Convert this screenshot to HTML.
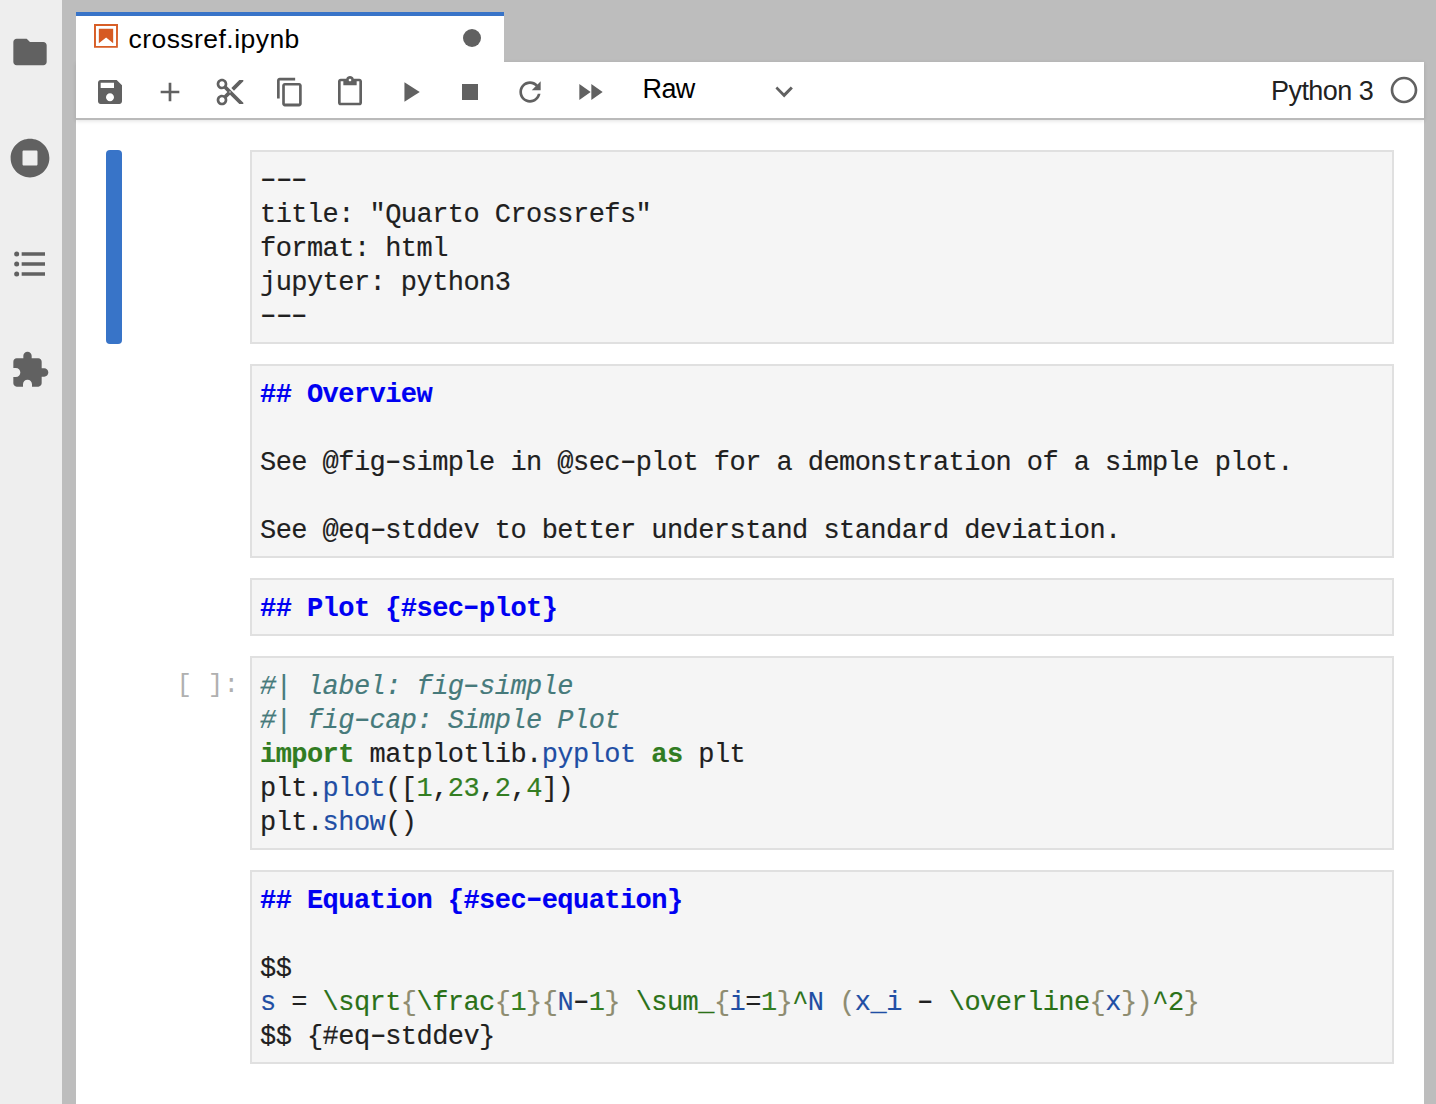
<!DOCTYPE html>
<html>
<head>
<meta charset="utf-8">
<style>
html,body{margin:0;padding:0;}
body{width:1436px;height:1104px;overflow:hidden;position:relative;background:#bdbdbd;font-family:"Liberation Sans",sans-serif;}
.abs{position:absolute;}
#sidebar{left:0;top:0;width:62px;height:1104px;background:#eeeeee;}
#sidebar svg{position:absolute;left:10px;width:40px;height:40px;}
#main{left:76px;top:62px;width:1348px;height:1042px;background:#ffffff;}
#tab{left:76px;top:12px;width:428px;height:47px;background:#fff;border-top:4px solid #3874c8;}
#toolbar{left:76px;top:62px;width:1348px;height:56px;background:#fff;border-bottom:2px solid #bababa;box-shadow:0 1px 4px rgba(0,0,0,0.12);}
.ti{position:absolute;top:76px;width:32px;height:32px;}
.ui{position:absolute;white-space:pre;color:#000;font-size:26px;line-height:30px;}
.collapser{left:106px;top:150px;width:16px;height:194px;border-radius:4px;background:#3874c8;}
.cell{position:absolute;left:250px;width:1140px;background:#f5f5f5;border:2px solid #e0e0e0;}
.code{position:absolute;left:260px;margin:0;white-space:pre;font-family:"Liberation Mono",monospace;font-size:27px;letter-spacing:-0.553px;line-height:34px;color:#202020;-webkit-text-stroke-width:0.15px;}
.d{display:inline-block;font-style:normal;transform:translateY(-1.3px) scaleX(1.6);}
.h{color:#0000f2;font-weight:bold;}
.cm{color:#467a7b;font-style:italic;}
.kw{color:#317c22;font-weight:bold;}
.pr{color:#1f4ea4;}
.nu{color:#337e22;}
.br{color:#8e8c70;}
.v2{color:#1f4ea4;}
.tg{color:#2b7118;}
.prompt{position:absolute;left:151px;width:88px;text-align:right;top:668px;white-space:pre;font-family:"Liberation Mono",monospace;font-size:26px;line-height:34px;color:#b0b0b0;}
</style>
</head>
<body>
<div id="sidebar" class="abs">
  <svg style="top:32px" viewBox="0 0 24 24"><path fill="#616161" d="M10 4H4c-1.1 0-1.99.9-1.99 2L2 18c0 1.1.9 2 2 2h16c1.1 0 2-.9 2-2V8c0-1.1-.9-2-2-2h-8l-2-2z"/></svg>
  <svg style="top:138px" viewBox="0 0 512 512"><path fill="#616161" d="M256 8C119 8 8 119 8 256s111 248 248 248 248-111 248-248S393 8 256 8zm96 328c0 8.8-7.2 16-16 16H176c-8.8 0-16-7.2-16-16V176c0-8.8 7.200-16 16-16h160c8.8 0 16 7.2 16 16v160z"/></svg>
  <svg style="top:244px" viewBox="0 0 24 24"><path fill="#616161" d="M7,5H21V7H7V5M7,13V11H21V13H7M4,4.5A1.5,1.5 0 0,1 5.5,6A1.5,1.5 0 0,1 4,7.5A1.5,1.5 0 0,1 2.5,6A1.5,1.5 0 0,1 4,4.5M4,10.5A1.5,1.5 0 0,1 5.5,12A1.5,1.5 0 0,1 4,13.5A1.5,1.5 0 0,1 2.5,12A1.5,1.5 0 0,1 4,10.5M7,19V17H21V19H7M4,16.5A1.5,1.5 0 0,1 5.5,18A1.5,1.5 0 0,1 4,19.5A1.5,1.5 0 0,1 2.5,18A1.5,1.5 0 0,1 4,16.5Z"/></svg>
  <svg style="top:350px" viewBox="0 0 24 24"><path fill="#616161" d="M20.5 11H19V7c0-1.1-.9-2-2-2h-4V3.5C13 2.12 11.88 1 10.5 1S8 2.12 8 3.5V5H4c-1.1 0-1.99.9-1.99 2v3.8H3.5c1.49 0 2.7 1.21 2.7 2.7s-1.21 2.7-2.7 2.7H2V20c0 1.1.9 2 2 2h3.8v-1.5c0-1.49 1.21-2.7 2.7-2.7 1.490 0 2.7 1.21 2.7 2.7V22H17c1.1 0 2-.9 2-2v-4h1.5c1.38 0 2.5-1.12 2.5-2.5S21.88 11 20.5 11z"/></svg>
</div>
<div id="main" class="abs"></div>
<div id="toolbar" class="abs"></div>
<div id="tab" class="abs"></div>
<svg class="abs" style="left:94px;top:24px;width:24px;height:24px" viewBox="1.8 1.8 18.4 18.4"><path fill="#d85e26" d="M18.7 3.3v15.4H3.3V3.3h15.4m1.5-1.5H1.8v18.3h18.3l.1-18.3z"/><path fill="#d65a22" d="M16.5 16.5l-5.4-4.3-5.6 4.3v-11h11z"/></svg>
<div class="ui" style="left:128.5px;top:24px;font-size:26.5px;letter-spacing:0.45px;">crossref.ipynb</div>
<div class="abs" style="left:463px;top:29px;width:18px;height:18px;border-radius:50%;background:#616161;"></div>
<svg class="ti" style="left:94px" viewBox="0 0 24 24"><path fill="#616161" d="M17 3H5c-1.11 0-2 .9-2 2v14c0 1.1.89 2 2 2h14c1.1 0 2-.9 2-2V7l-4-4zm-5 16c-1.66 0-3-1.34-3-3s1.34-3 3-3 3 1.34 3 3-1.34 3-3 3zm3-10H5V5h10v4z"/></svg>
<svg class="ti" style="left:154px" viewBox="0 0 24 24"><path fill="#616161" d="M19 13h-6v6h-2v-6H5v-2h6V5h2v6h6v2z"/></svg>
<svg class="ti" style="left:214px" viewBox="0 0 24 24"><path fill="#616161" d="M9.64 7.64c.23-.5.36-1.05.36-1.64 0-2.21-1.79-4-4-4S2 3.79 2 6s1.79 4 4 4c.59 0 1.14-.13 1.64-.36L10 12l-2.36 2.36C7.140 14.13 6.59 14 6 14c-2.21 0-4 1.79-4 4s1.79 4 4 4 4-1.79 4-4c0-.59-.13-1.14-.36-1.64L12 14l7 7h3v-1L9.64 7.64zM6 8c-1.1 0-2-.89-2-2s.9-2 2-2 2 .89 2 2-.9 2-2 2zm0 12c-1.1 0-2-.89-2-2s.9-2 2-2 2 .89 2 2-.9 2-2 2zm6-7.5c-.28 0-.5-.22-.5-.5s.22-.5.5-.5.5.22.5.5-.22.5-.5.5zM19 3l-6 6 2 2 7-7V3z"/></svg>
<svg class="ti" style="left:274px" viewBox="0 0 18 18"><path fill="#616161" d="M11.9,1H3.2C2.4,1,1.7,1.7,1.7,2.5v10.2h1.5V2.5h8.7V1z M14.1,3.9h-8c-0.8,0-1.5,0.7-1.5,1.5v10.2c0,0.8,0.7,1.5,1.5,1.5h8 c0.8,0,1.5-0.7,1.5-1.5V5.4C15.6,4.6,14.9,3.9,14.1,3.9z M14.1,15.5h-8V5.4h8V15.5z"/></svg>
<svg class="ti" style="left:334px" viewBox="0 0 24 24"><path fill="#616161" d="M19 2h-4.18C14.4.84 13.3 0 12 0c-1.3 0-2.4.84-2.82 2H5c-1.1 0-2 .9-2 2v16c0 1.1.9 2 2 2h14c1.1 0 2-.9 2-2V4c0-1.1-.9-2-2-2zm-7 0c.55 0 1 .45 1 1s-.45 1-1 1-1-.45-1-1 .45-1 1-1zm7 18H5V4h2v3h10V4h2v16z"/></svg>
<svg class="ti" style="left:394px" viewBox="0.5 0.5 23 23"><path fill="#616161" d="M8 5v14l11-7z"/></svg>
<svg class="ti" style="left:454px" viewBox="0 0 24 24"><path fill="#616161" d="M6 6h12v12H6z"/></svg>
<svg class="ti" style="left:514px" viewBox="0 0 18 18"><path fill="#616161" d="M9 13.5c-2.49 0-4.5-2.01-4.5-4.5S6.51 4.5 9 4.5c1.24 0 2.36.52 3.17 1.33L10 8h5V3l-1.76 1.76C12.15 3.68 10.66 3 9 3 5.69 3 3.01 5.690 3.01 9S5.69 15 9 15c2.97 0 5.43-2.16 5.9-5h-1.52c-.46 2-2.240 3.5-4.38 3.5z"/></svg>
<svg class="ti" style="left:574px" viewBox="0 0 24 24"><path fill="#616161" d="M4 18l8.5-6L4 6v12zm9-12v12l8.5-6L13 6z"/></svg>
<div class="ui" style="left:642.5px;top:74px;font-size:27px;letter-spacing:-0.6px;">Raw</div>
<svg class="ti" style="left:768px" viewBox="0 0 18 18"><path fill="#616161" d="M5.2,5.9L9,9.7l3.8-3.8l1.2,1.2l-4.9,5l-4.9-5L5.2,5.9z"/></svg>
<div class="ui" style="left:1271px;top:76px;font-size:27px;letter-spacing:-0.55px;color:#212121;">Python 3</div>
<svg class="ti" style="left:1388px;top:74px" viewBox="0 0 24 24"><path fill="#616161" d="M12 2C6.47 2 2 6.47 2 12s4.470 10 10 10 10-4.47 10-10S17.53 2 12 2zm0 18c-4.41 0-8-3.59-8-8s3.59-8 8-8 8 3.59 8 8-3.59 8-8 8z"/></svg>

<div class="abs collapser"></div>

<div class="cell" style="top:150px;height:190px;"></div>
<pre class="code" style="top:164px;"><i class="d">-</i><i class="d">-</i><i class="d">-</i>
title: "Quarto Crossrefs"
format: html
jupyter: python3
<i class="d">-</i><i class="d">-</i><i class="d">-</i></pre>

<div class="cell" style="top:364px;height:190px;"></div>
<pre class="code" style="top:378px;"><span class="h">## Overview</span>

See @fig<i class="d">-</i>simple in @sec<i class="d">-</i>plot for a demonstration of a simple plot.

See @eq<i class="d">-</i>stddev to better understand standard deviation.</pre>

<div class="cell" style="top:578px;height:54px;"></div>
<pre class="code" style="top:592px;"><span class="h">## Plot {#sec<i class="d">-</i>plot}</span></pre>

<div class="prompt">[ ]:</div>
<div class="cell" style="top:656px;height:190px;"></div>
<pre class="code" style="top:670px;"><span class="cm">#| label: fig<i class="d">-</i>simple</span>
<span class="cm">#| fig<i class="d">-</i>cap: Simple Plot</span>
<span class="kw">import</span> matplotlib.<span class="pr">pyplot</span> <span class="kw">as</span> plt
plt.<span class="pr">plot</span>([<span class="nu">1</span>,<span class="nu">23</span>,<span class="nu">2</span>,<span class="nu">4</span>])
plt.<span class="pr">show</span>()</pre>

<div class="cell" style="top:870px;height:190px;"></div>
<pre class="code" style="top:884px;"><span class="h">## Equation {#sec<i class="d">-</i>equation}</span>

$$
<span class="v2">s</span> = <span class="tg">\sqrt</span><span class="br">{</span><span class="tg">\frac</span><span class="br">{</span><span class="nu">1</span><span class="br">}{</span><span class="v2">N</span><i class="d">-</i><span class="nu">1</span><span class="br">}</span> <span class="tg">\sum_</span><span class="br">{</span><span class="v2">i</span>=<span class="nu">1</span><span class="br">}</span><span class="tg">^</span><span class="v2">N</span> <span class="br">(</span><span class="v2">x_i</span> <i class="d">-</i> <span class="tg">\overline</span><span class="br">{</span><span class="v2">x</span><span class="br">})</span><span class="tg">^2</span><span class="br">}</span>
$$ {#eq<i class="d">-</i>stddev}</pre>
</body>
</html>
